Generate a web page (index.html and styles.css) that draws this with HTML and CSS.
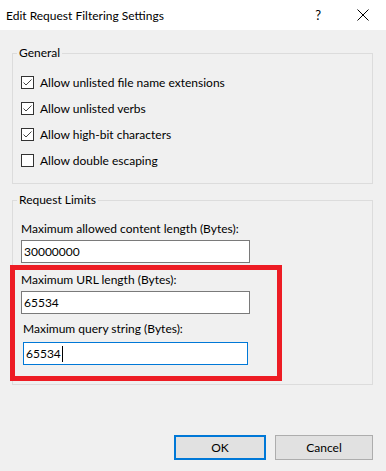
FILE: index.html
```html
<!DOCTYPE html>
<html lang="en">
<head>
    <meta charset="UTF-8">
    <title>Edit Request Filtering Settings</title>
    <link rel="stylesheet" href="styles.css">
</head>
<body>
    <div class="window">
        <div class="titlebar">
            <span class="title">Edit Request Filtering Settings</span>
            <span class="help">?</span>
            <svg class="close" width="12" height="12" viewBox="0 0 12 12">
                <path d="M0.5 0.5 L11.5 11.5 M11.5 0.5 L0.5 11.5" stroke="#000" stroke-width="1" fill="none"/>
            </svg>
        </div>

        <div class="content">
            <fieldset class="group general">
                <legend>General</legend>
                <label class="check-row">
                    <span class="box checked"><svg width="11" height="11" viewBox="0 0 11 11"><polyline points="1.5,5.5 4,8 9.5,2.5" stroke="#444" stroke-width="1" fill="none"/></svg></span>
                    Allow unlisted file name extensions
                </label>
                <label class="check-row">
                    <span class="box checked"><svg width="11" height="11" viewBox="0 0 11 11"><polyline points="1.5,5.5 4,8 9.5,2.5" stroke="#444" stroke-width="1" fill="none"/></svg></span>
                    Allow unlisted verbs
                </label>
                <label class="check-row">
                    <span class="box checked"><svg width="11" height="11" viewBox="0 0 11 11"><polyline points="1.5,5.5 4,8 9.5,2.5" stroke="#444" stroke-width="1" fill="none"/></svg></span>
                    Allow high-bit characters
                </label>
                <label class="check-row">
                    <span class="box"></span>
                    Allow double escaping
                </label>
            </fieldset>

            <fieldset class="group limits">
                <legend>Request Limits</legend>
                <div class="field-label first">Maximum allowed content length (Bytes):</div>
                <div class="textbox">30000000</div>
                <div class="field-label second">Maximum URL length (Bytes):</div>
                <div class="textbox">65534</div>
                <div class="field-label third shifted">Maximum query string (Bytes):</div>
                <div class="textbox focused shifted">65534<span class="caret"></span></div>
            </fieldset>

            <div class="buttons">
                <button class="btn default">OK</button>
                <button class="btn">Cancel</button>
            </div>
        </div>

        <div class="highlight"></div>
    </div>
</body>
</html>
```

FILE: styles.css
```css
* {
    margin: 0;
    padding: 0;
    box-sizing: border-box;
}

body {
    background: #f0f0f0;
    font-family: "Segoe UI", Lato, "Liberation Sans", sans-serif;
    font-size: 12px;
    color: #000;
}

.window {
    position: relative;
    width: 386px;
    height: 471px;
}

.titlebar {
    height: 30px;
    background: #fff;
    display: flex;
    align-items: center;
}

.title {
    padding-left: 6px;
    flex: 1;
}

.help {
    margin-right: 36px;
    font-size: 13px;
}

.close {
    margin-right: 17px;
}

.content {
    padding: 15px 13px 0 12px;
}

.group {
    border: 1px solid #dcdcdc;
    width: 361px;
    padding: 0 0 0 8px;
}

.group legend {
    margin-left: -4px;
    padding: 0 2px;
    line-height: 16px;
}

.general {
    padding-top: 8px;
    padding-bottom: 10px;
}

.check-row {
    display: flex;
    align-items: center;
    height: 26px;
}

.box {
    width: 13px;
    height: 13px;
    border: 1px solid #333;
    background: #fff;
    margin-right: 6px;
    display: flex;
}

.limits {
    margin-top: 8px;
    padding-bottom: 19px;
}

.field-label {
    line-height: 16px;
    margin-bottom: 3px;
}

.field-label.first {
    margin-top: 13px;
}

.field-label.second {
    margin-top: 9px;
}

.field-label.third {
    margin-top: 7px;
    margin-bottom: 5px;
}

.textbox {
    width: 229px;
    height: 23px;
    border: 1px solid #7a7a7a;
    background: #fff;
    padding-left: 2px;
    line-height: 21px;
    display: flex;
    align-items: center;
}

.shifted {
    margin-left: 2px;
}

.textbox.focused {
    width: 225px;
    border-color: #0078d7;
}

.caret {
    width: 1px;
    height: 16px;
    background: #000;
    margin-left: 1px;
}

.buttons {
    display: flex;
    justify-content: flex-end;
    gap: 9px;
    margin-top: 50px;
}

.btn {
    height: 25px;
    background: #e1e1e1;
    border: 1px solid #adadad;
    font-family: inherit;
    font-size: 12px;
    color: #000;
    width: 98px;
}

.btn.default {
    width: 92px;
    border: 2px solid #0078d7;
}

.highlight {
    position: absolute;
    left: 10px;
    top: 265px;
    width: 272px;
    height: 116px;
    border: 5px solid #ed1c24;
}
```
